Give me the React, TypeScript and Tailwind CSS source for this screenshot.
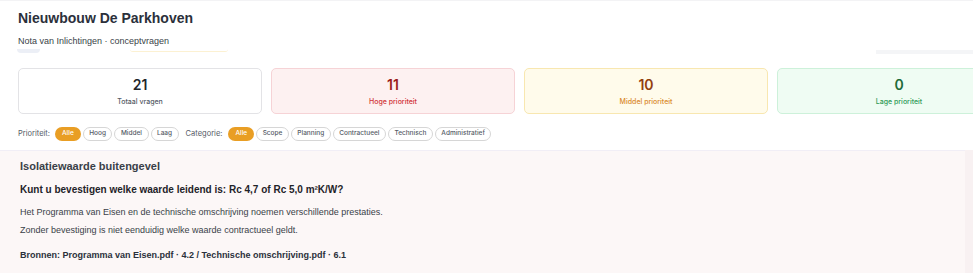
import React from "react";

const inter = { fontFamily: "Inter, 'Noto Sans', sans-serif" };

function Stat({ n, label, box, num, lab }: { n: string; label: string; box: string; num: string; lab: string }) {
  return (
    <div className={`h-[46px] rounded-[5px] border flex flex-col items-center justify-center ${box}`}>
      <div className={`text-[14px] leading-[16px] font-semibold ${num}`}>{n}</div>
      <div className={`text-[7px] leading-[9px] mt-[4px] font-medium ${lab}`}>{label}</div>
    </div>
  );
}

function Pill({ t, active }: { t: string; active?: boolean }) {
  return active ? (
    <span className="h-[14px] px-[7px] rounded-full bg-[#e99e24] text-white text-[6.5px] font-medium flex items-center">{t}</span>
  ) : (
    <span className="h-[14px] px-[5.5px] rounded-full border border-[#d6d6d6] bg-white text-[#555b66] text-[6.5px] font-medium flex items-center">{t}</span>
  );
}

export default function App() {
  return (
    <div className="w-[973px] h-[273px] overflow-hidden bg-white relative" style={{ fontFamily: "'Liberation Sans', Arial, sans-serif" }}>
      <div className="h-px bg-[#f3f3f5]" />
      <div className="px-[18px] pt-[9px]">
        <h1 className="text-[14px] leading-[17px] font-bold text-[#2b303b]">Nieuwbouw De Parkhoven</h1>
        <p className="text-[9px] leading-[12px] mt-[8px] text-[#3a3f48]">Nota van Inlichtingen · conceptvragen</p>
      </div>
      <div className="flex h-[5px] mt-[2px]">
        <div className="ml-[17px] w-[23px] h-[4px] rounded-b-[4px] bg-[#eceff6]" />
        <div className="ml-[90px] w-[98px] h-[3px] rounded-b-[4px] border-b border-[#fcf1d2]" />
        <div className="ml-[648px] w-[97px] h-[4px] mt-[1px] bg-[#f4f5f7]" />
      </div>
      <div className="w-[1039px] px-[18px] mt-[14px] grid grid-cols-4 gap-[9px]" style={inter}>
        <Stat n="21" label="Totaal vragen" box="bg-white border-[#e3e3e6]" num="text-[#22252b]" lab="text-[#555b66]" />
        <Stat n="11" label="Hoge prioriteit" box="bg-[#fdf1f1] border-[#f6d3d6]" num="text-[#9b1c1c]" lab="text-[#d13438]" />
        <Stat n="10" label="Middel prioriteit" box="bg-[#fffbeb] border-[#f8e7b0]" num="text-[#92400e]" lab="text-[#d9892b]" />
        <Stat n="0" label="Lage prioriteit" box="bg-[#effcf3] border-[#cdf1da]" num="text-[#1f6b3a]" lab="text-[#2e9a56]" />
      </div>
      <div className="flex items-center gap-[2px] px-[18px] mt-[13px]" style={inter}>
        <span className="text-[7.5px] text-[#555b66] mr-[3px]">Prioriteit:</span>
        <Pill t="Alle" active />
        <Pill t="Hoog" />
        <Pill t="Middel" />
        <Pill t="Laag" />
        <span className="text-[7.5px] text-[#555b66] ml-[5px] mr-[4px]">Categorie:</span>
        <Pill t="Alle" active />
        <Pill t="Scope" />
        <Pill t="Planning" />
        <Pill t="Contractueel" />
        <Pill t="Technisch" />
        <Pill t="Administratief" />
      </div>
      <div className="mt-[9px] flex">
        <div className="w-[965px] h-[130px] bg-[#fcf7f7] border-t border-[#f1eef6] px-[20px] pt-[8px]">
          <h2 className="text-[11px] leading-[14px] font-bold text-[#3a3f48]">Isolatiewaarde buitengevel</h2>
          <p className="text-[10px] leading-[13px] font-bold text-[#1f2329] mt-[10px]">Kunt u bevestigen welke waarde leidend is: Rc 4,7 of Rc 5,0 m²K/W?</p>
          <p className="text-[9px] leading-[12px] text-[#3a3f48] mt-[10px]">Het Programma van Eisen en de technische omschrijving noemen verschillende prestaties.</p>
          <p className="text-[9px] leading-[12px] text-[#3a3f48] mt-[6px]">Zonder bevestiging is niet eenduidig welke waarde contractueel geldt.</p>
          <p className="text-[9px] leading-[12px] font-bold text-[#2b303b] mt-[13px]">Bronnen: Programma van Eisen.pdf · 4.2 / Technische omschrijving.pdf · 6.1</p>
        </div>
        <div className="w-[8px] h-[130px] bg-[#f8f1f2]" />
      </div>
    </div>
  );
}
